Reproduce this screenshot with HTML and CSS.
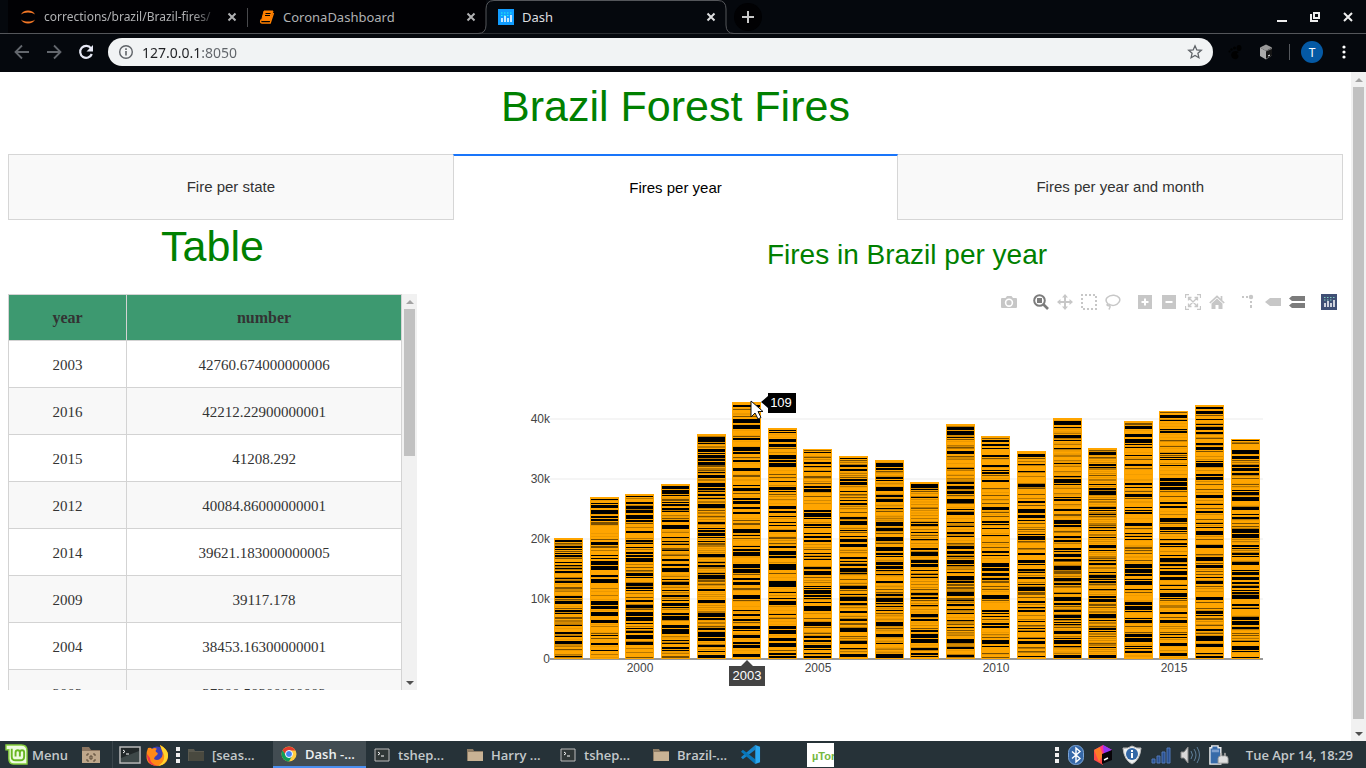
FILE: index.html
```html
<!DOCTYPE html>
<html lang="en">
<head>
<meta charset="utf-8">
<title>Dash</title>
<link rel="stylesheet" href="styles.css">
</head>
<body>
<div class="desktop">
  <header class="browser">
    <div class="tabstrip">
      <div class="btab">
        <svg class="i16" viewBox="0 0 16 16"><path d="M1 5.500C3 .3 13 .3 15 5.500C12 2.700 4 2.700 1 5.500zM1 10.500C3 15.700 13 15.700 15 10.500C12 13.300 4 13.300 1 10.500z" fill="#f37726"/></svg>
        <span class="btab-title faded">corrections/brazil/Brazil-fires/</span>
        <button class="x" aria-label="Close tab"><svg viewBox="0 0 10 10"><path d="M1.500 1.500l7 7M8.500 1.500l-7 7"/></svg></button>
      </div>
      <div class="btab divided">
        <svg class="i16" viewBox="0 0 16 16"><path d="M5 2h9l-2.500 9.500h-9z" fill="#ff8000" stroke="#ff8000" stroke-linejoin="round"/><path d="M2.200 10.500q-1.500 3.500.8 3.500h8.200L14.500 4" fill="none" stroke="#ff8000" stroke-width="1.400"/><path d="M6.500 4.500h5M6 6.500h5" stroke="#000" fill="none"/></svg>
        <span class="btab-title">CoronaDashboard</span>
        <button class="x" aria-label="Close tab"><svg viewBox="0 0 10 10"><path d="M1.500 1.500l7 7M8.500 1.500l-7 7"/></svg></button>
      </div>
      <div class="btab current">
        <svg class="outline" viewBox="0 0 256 34"><path d="M0 33.500Q8 33.500 8 25V9Q8 .5 16 .5H240Q248 .5 248 9V25Q248 33.500 256 33.500" fill="#05080d" stroke="#54565a"/></svg>
        <svg class="i16" viewBox="0 0 16 16"><path fill="#119dff" d="M0 0h16v16H0z"/><path d="M4 9v4M7 7v6M10 9v4M13 6v7" stroke="#fff" stroke-width="1.500"/><path d="M3 4h11M3 6.500h9" stroke="#25f4ee" stroke-dasharray="1.500 1.500"/></svg>
        <span class="btab-title">Dash</span>
        <button class="x" aria-label="Close tab"><svg viewBox="0 0 10 10"><path d="M1.500 1.500l7 7M8.500 1.500l-7 7"/></svg></button>
      </div>
      <button class="newtab" aria-label="New tab"><svg viewBox="0 0 12 12"><path d="M6 0v12M0 6h12" stroke="#c8c8c8" stroke-width="2"/></svg></button>
      <div class="winbtns">
        <button aria-label="Minimize"><svg viewBox="0 0 10 10"><path d="M0 9h10" stroke="#eee" stroke-width="2"/></svg></button>
        <button aria-label="Restore"><svg viewBox="0 0 10 10"><path d="M4 1h5v5H4z M1 2v7h7" fill="none" stroke="#eee" stroke-width="2"/></svg></button>
        <button aria-label="Close"><svg viewBox="0 0 10 10"><path d="M1 1l8 8M9 1l-8 8" stroke="#eee" stroke-width="2"/></svg></button>
      </div>
    </div>
    <div class="toolbar">
      <button aria-label="Back"><svg class="i16" viewBox="0 0 16 16"><path d="M15 8H2M8 1.500L1.500 8 8 14.500" fill="none" stroke="#63676d" stroke-width="1.800"/></svg></button>
      <button aria-label="Forward"><svg class="i16" viewBox="0 0 16 16"><path d="M1 8h13M8 1.500L14.500 8 8 14.500" fill="none" stroke="#63676d" stroke-width="1.800"/></svg></button>
      <button aria-label="Reload"><svg class="i16" viewBox="0 0 16 16"><path d="M13 4.300A6 6 0 1 0 13.800 10" fill="none" stroke="#e6e8f4" stroke-width="2.200"/><path d="M15 1v6.500H8.500z" fill="#e6e8f4"/></svg></button>
      <div class="omnibox">
        <svg class="i16" viewBox="0 0 16 16"><circle cx="8" cy="8" r="6.300" fill="none" stroke="#5f6368" stroke-width="1.400"/><path d="M8 7v4.500M8 4.300v1.600" stroke="#5f6368" stroke-width="1.600"/></svg>
        <input class="url" type="text" aria-label="Address" value="127.0.0.1:8050">
        <button aria-label="Bookmark"><svg class="i16" viewBox="0 0 16 16"><path d="M8 1.800l1.800 4.100 4.500.4-3.400 3 1 4.400L8 11.400l-3.900 2.300 1-4.400-3.400-3 4.500-.4z" fill="none" stroke="#5f6368" stroke-width="1.300"/></svg></button>
      </div>
      <div class="extensions">
        <svg class="i16" viewBox="0 0 16 16" fill="#000"><ellipse cx="12" cy="4" rx="2.500" ry="3"/><circle cx="7.500" cy="4" r="1.500"/><circle cx="4.500" cy="5.500" r="1.200"/><circle cx="2.500" cy="7.500" r="1"/><path d="M12 8C7 5 3 9 4.500 12.500S11 16 11.500 12.500 7 11.500 12 8z"/></svg>
        <svg class="i16" viewBox="0 0 16 16"><path d="M8 .5l6 3-6 3.500-6-3.500z" fill="#999"/><path d="M2 3.500L8 7v8.500l-6-3.500z" fill="#aaa"/><path d="M14 3.500L8 7v8.500l6-4z" fill="#777"/><path d="M8 7.500L14 5v6.500l-6 3z" fill="#151515"/><path d="M10 12l2-1" stroke="#fff"/></svg>
        <span class="bar"></span>
        <button class="avatar">T</button>
        <button class="kebab" aria-label="Menu"><svg viewBox="0 0 4 14" fill="#fff"><circle cx="2" cy="2" r="1.600"/><circle cx="2" cy="7" r="1.600"/><circle cx="2" cy="12" r="1.600"/></svg></button>
      </div>
    </div>
  </header>

  <div class="viewport">
    <main class="page">
      <h1>Brazil Forest Fires</h1>
      <nav class="tabs" role="tablist">
        <button class="tab" role="tab">Fire per state</button>
        <button class="tab selected" role="tab" aria-selected="true">Fires per year</button>
        <button class="tab" role="tab">Fires per year and month</button>
      </nav>
      <div class="columns">
        <section class="left">
          <h2>Table</h2>
          <div class="table-box">
            <table>
              <thead><tr><th class="year">year</th><th>number</th></tr></thead>
              <tbody>
                <tr><td>2003</td><td>42760.674000000006</td></tr>
                <tr><td>2016</td><td>42212.22900000001</td></tr>
                <tr><td>2015</td><td>41208.292</td></tr>
                <tr><td>2012</td><td>40084.86000000001</td></tr>
                <tr><td>2014</td><td>39621.183000000005</td></tr>
                <tr><td>2009</td><td>39117.178</td></tr>
                <tr><td>2004</td><td>38453.16300000001</td></tr>
                <tr><td>2002</td><td>37390.58300000002</td></tr>
              </tbody>
            </table>
            <div class="scroll"><i class="up"></i><span class="thumb table-thumb"></span><i class="down"></i></div>
          </div>
        </section>
        <section class="right">
          <h3>Fires in Brazil per year</h3>
          <div class="modebar">
            <div class="group"><button aria-label="Download plot"><svg viewBox="0 0 16 16"><path d="M1 4h3.500L6 2h4.500L12 4h3q1 0 1 1v8q0 1-1 1H1q-1 0-1-1V5q0-1 1-1z"/><circle cx="8" cy="8.700" r="3.400" fill="none" stroke="#fff" stroke-width="1.600"/></svg></button></div>
            <div class="group">
              <button class="on" aria-label="Zoom"><svg viewBox="0 0 16 16"><circle cx="6.500" cy="6.500" r="5.300" fill="none" stroke="currentColor" stroke-width="2"/><path d="M4 4h5v5H4z"/><path d="M10.500 10.500L15 15" stroke="currentColor" stroke-width="2.600"/></svg></button>
              <button aria-label="Pan"><svg viewBox="0 0 16 16"><path d="M8 0l3 3.500H9V7h3.500V5L16 8l-3.500 3V9H9v3.500h2L8 16l-3-3.500h2V9H3.500v2L0 8l3.500-3v2H7V3.500H5z"/></svg></button>
              <button aria-label="Box select"><svg viewBox="0 0 16 16"><path d="M1 1h14v14H1z" fill="none" stroke="currentColor" stroke-width="2" stroke-dasharray="2 2" stroke-dashoffset="1"/></svg></button>
              <button aria-label="Lasso select"><svg viewBox="0 0 16 16"><path d="M3 10C-2 5 4 .8 9 1.200s7 4 5 7-6 4-9 2.500c-3-2-4 1-1.500 1S5 14 3.800 15.500" fill="none" stroke="currentColor" stroke-width="1.500"/></svg></button>
            </div>
            <div class="group">
              <button aria-label="Zoom in"><svg viewBox="0 0 16 16"><path d="M1 1h14v14H1z"/><path d="M8 4.500v7M4.500 8h7" stroke="#fff" stroke-width="2"/></svg></button>
              <button aria-label="Zoom out"><svg viewBox="0 0 16 16"><path d="M1 1h14v14H1z"/><path d="M4.500 8h7" stroke="#fff" stroke-width="2"/></svg></button>
              <button aria-label="Autoscale"><svg viewBox="0 0 16 16"><path d="M.5 4V.5H4M12 .5h3.500V4M15.500 12v3.500H12M4 15.500H.5V12M4 4l8 8M12 4l-8 8M3.500 6.500v-3h3M9.500 3.500h3v3M12.500 9.500v3h-3M6.500 12.500h-3v-3" fill="none" stroke="currentColor" stroke-width="1.300"/></svg></button>
              <button aria-label="Reset axes"><svg viewBox="0 0 16 16"><path d="M8 4.500l5.500 5V15H9.500v-4h-3v4h-4V9.500z"/><path d="M.8 9L8 2.300 15.200 9M12.500 2v4" fill="none" stroke="currentColor" stroke-width="1.700"/></svg></button>
            </div>
            <div class="group">
              <button aria-label="Toggle spike lines"><svg viewBox="0 0 16 16"><path d="M1 3h2M5 3h2M10 7v2M10 11v3" stroke="currentColor" stroke-width="2"/><circle cx="10" cy="3" r="2.200"/></svg></button>
              <button aria-label="Closest data"><svg viewBox="0 0 16 16"><path d="M0 8l5-4h11v8H5z"/></svg></button>
              <button class="on" aria-label="Compare data"><svg viewBox="0 0 16 16"><path d="M0 4.500L3 2h13v5H3zM0 11.500L3 9h13v5H3z"/></svg></button>
            </div>
            <div class="group"><button aria-label="Plotly"><svg viewBox="0 0 16 16"><path d="M0 0h16v16H0z" fill="#3f4f75"/><path d="M4 9v4M7 7v6M10 9v4M13 6v7" stroke="#fff" stroke-width="1.500"/><path d="M3 3.500h11M3 6h9" stroke="#80cfbe" stroke-dasharray="1.500 1.500"/></svg></button></div>
          </div>
          <svg class="chart" viewBox="0 0 872 376" role="img" aria-label="Fires in Brazil per year">
            <path d="M79 105h713M79 165h713M79 225h713M79 285h713" stroke="#f5f5f5" stroke-width="2"/>
            <path d="M79 345h713" stroke="#999" stroke-width="2"/>
            <g id="bars" shape-rendering="crispEdges"></g>
            <g class="ticks ytick"><text x="79" y="109">40k</text><text x="79" y="169">30k</text><text x="79" y="229">20k</text><text x="79" y="289">10k</text><text x="79" y="349">0</text></g>
            <g class="ticks xtick"><text x="169" y="358">2000</text><text x="347" y="358">2005</text><text x="525" y="358">2010</text><text x="703" y="358">2015</text></g>
            <path d="M290 88l7-6v-3h28v20h-28v-5z" fill="#000"/>
            <path d="M276 346l6 6h12v20h-36v-20h12z" fill="#444"/>
            <g class="hover"><text x="310" y="93">109</text><text x="276" y="366">2003</text></g>
            <path d="M280 87v16l4-4 3 6 3-1.500-3-6h5z" fill="#fff" stroke="#111"/>
          </svg>
        </section>
      </div>
    </main>
    <div class="scroll"><i class="up"></i><span class="thumb page-thumb"></span><i class="down"></i></div>
  </div>

  <footer class="taskbar">
    <button class="menu"><svg class="mint" viewBox="0 0 24 22"><path d="M1 1h16q6 0 6 6v14H9q-5 0-5-6V6H1z" fill="#eefbe0" stroke="#87cf3e" stroke-width="1.500"/><path d="M7 5v8q0 4 4 4h5q4 0 4-4V9q0-2.500-2.200-2.500T15.500 9v4M15.500 9q0-2.500-2.200-2.500T11 9v4" fill="none" stroke="#68b723" stroke-width="2"/></svg>Menu</button>
    <button class="files" aria-label="Files"><svg viewBox="0 0 20 18"><path d="M1 1h7l2 3h9v13H1z" fill="#8b7560"/><path d="M1 5h18v12H1z" fill="#bfa78b"/><path d="M6 10V8h2M12 8h2v2M14 13v2h-2M8 15H6v-2M9 10h2v3H9z" fill="none" stroke="#594836"/></svg></button>
    <button class="launch first" aria-label="Terminal"><svg viewBox="0 0 22 18"><path d="M1 1h20v16H1z" fill="#222829" stroke="#bbb" stroke-width="1.500"/><path d="M2 12l18-7v11H2z" fill="#3e4848"/><path d="M4 4l2 1.500L4 7M7 8h3" stroke="#fff" fill="none"/></svg></button>
    <button class="launch" aria-label="Firefox"><svg viewBox="0 0 22 22"><circle cx="11" cy="11.500" r="9" fill="#3b3fb8"/><path d="M2 4q3-1 4 1 3-2 5 0-2 1-1 3 3 1 1 3-3 2-3 4 3 2 6 0 4-3 2-8l-2-6q8 4 8 11 0 9-11 10Q0 21 .5 12 .5 7 2 4z" fill="#ff8a16"/><path d="M14 1q9 5 8 12-2 8-10 9 7-4 6-11z" fill="#ffd52d"/><path d="M1 10q0 12 11 12-8-2-8-8z" fill="#f1334b"/></svg></button>
    <svg class="dots" viewBox="0 0 4 16"><path d="M0 0h4v4H0zM0 6h4v4H0zM0 12h4v4H0z" fill="#eee"/></svg>
    <button class="win"><svg class="i16" viewBox="0 0 16 16"><path d="M0 2h6l1 2h9v10H0z" fill="#5a594f"/><path d="M1 5h15v9H1z" fill="#49493f"/></svg>[seas...</button>
    <button class="win active"><svg class="i16" viewBox="0 0 16 16"><circle cx="8" cy="8" r="7.500" fill="#ffcd40"/><path d="M1.500 4.300A7.500 7.500 0 0 1 14.500 4.500H8L4.800 9.500z" fill="#e33b2e"/><path d="M1.500 4.300A7.500 7.500 0 0 0 8 15.500L11 10 5 9.500z" fill="#109d58"/><circle cx="8" cy="8" r="3.500" fill="#4285f4" stroke="#fff"/></svg>Dash -...</button>
    <button class="win"><svg class="i16" viewBox="0 0 16 16"><path d="M1 2h14v12H1z" fill="#303737" stroke="#bbb"/><path d="M4 5l2 1.500L4 8M7 9h3" stroke="#fff" fill="none"/></svg>tshep...</button>
    <button class="win"><svg class="i16" viewBox="0 0 16 16"><path d="M0 2h6l1 2h9v10H0z" fill="#8f7d66"/><path d="M1 5h15v9H1z" fill="#c8b294"/></svg>Harry ...</button>
    <button class="win"><svg class="i16" viewBox="0 0 16 16"><path d="M1 2h14v12H1z" fill="#303737" stroke="#bbb"/><path d="M4 5l2 1.500L4 8M7 9h3" stroke="#fff" fill="none"/></svg>tshep...</button>
    <button class="win"><svg class="i16" viewBox="0 0 16 16"><path d="M0 2h6l1 2h9v10H0z" fill="#8f7d66"/><path d="M1 5h15v9H1z" fill="#c8b294"/></svg>Brazil-...</button>
    <button class="code" aria-label="Code"><svg viewBox="0 0 22 22"><path d="M16 1L1 14l2 2L16 6z" fill="#1684ca"/><path d="M16 21L1 8l2-2 13 10z" fill="#0876b9"/><path d="M16 1l5 2v16l-5 2z" fill="#29a7f0"/></svg></button>
    <span class="utor">µTor</span>
    <div class="tray">
      <svg class="dots" viewBox="0 0 4 16"><path d="M0 0h4v4H0zM0 6h4v4H0zM0 12h4v4H0z" fill="#eee"/></svg>
      <svg class="t16" viewBox="0 0 16 20"><rect x=".5" y=".5" width="15" height="19" rx="7" fill="#3668a8" stroke="#7aa5d8"/><path d="M4 6.500l8 7-4 3.500V3l4 3.500-8 7" fill="none" stroke="#fff" stroke-width="1.400"/></svg>
      <svg class="t20" viewBox="0 0 20 20"><path d="M10 0l9 5-9 5-9-5z" fill="#ff328b"/><path d="M1 5l9 5v10l-9-5z" fill="#ff4848"/><path d="M1 5l6-3 3 8-4 7z" fill="#ff7c28"/><path d="M10 0l9 5-8 5z" fill="#9435f5"/><path d="M9 9l10-4v10L9 19z" fill="#080408"/><path d="M11 15l4-2" stroke="#fff" stroke-width="1.500"/></svg>
      <svg class="t20" viewBox="0 0 20 20"><path d="M10 1q5 3 9 2-1 12-9 16Q2 15 1 3q5 1 9-2z" fill="#eef0f0" stroke="#bbb"/><circle cx="10" cy="9" r="6" fill="#3267a6"/><path d="M10 8v5M10 5v2" stroke="#fff" stroke-width="2"/></svg>
      <svg class="t20" viewBox="0 0 20 16"><path d="M1 12h3v4H1zM6 9h3v7H6zM11 5h3v11h-3zM16 1h3v15h-3z" fill="#284f91" stroke="#5078b8"/></svg>
      <svg class="t20" viewBox="0 0 20 18"><path d="M1 6h3l4-5v16l-4-5H1z" fill="#d8d8d8" stroke="#888"/><path d="M11 5q3 4 0 8M14 3q4 6 0 12M17 1q5 8 0 16" fill="none" stroke="#5f7f9a"/></svg>
      <svg class="t20" viewBox="0 0 22 22"><path d="M3 1h7v2h3v18H1V3h2z" fill="#386ba9" stroke="#eee" stroke-width="1.500"/><path d="M3 5h8v3H3z" fill="#7d9fce"/><path d="M10 20v-5q0-3 3-3V9h1v3h3V9h1v3q3 0 3 3v5z" fill="#dedede" stroke="#999"/></svg>
      <time>Tue Apr 14, 18:29</time>
    </div>
  </footer>
</div>
<script src="chart.js"></script>
</body>
</html>
```
FILE: styles.css
```css
* { box-sizing: border-box; }
body { margin: 0; font-family: "Liberation Sans", Arial, sans-serif; background: #fff; }
button { border: 0; padding: 0; margin: 0; background: none; font: inherit; color: inherit; display: flex; align-items: center; }
svg { display: block; flex: none; }
.i16 { width: 16px; height: 16px; }
.desktop { display: flex; flex-direction: column; height: 100vh; overflow: hidden; }

.browser { background: #05080d; font: 13px "Noto Sans", "Open Sans", sans-serif; flex: none; }
.tabstrip { display: flex; align-items: center; height: 34px; padding-left: 8px; border-bottom: 1px solid #54565a; }
.btab { display: flex; align-items: center; gap: 8px; width: 239px; height: 33px; padding: 0 10px 0 12px; color: #b0b1b3; background: #010104; position: relative; }
.btab > * { position: relative; }
.btab-title { flex: 1; white-space: nowrap; overflow: hidden; }
.faded { font-size: 12px; -webkit-mask-image: linear-gradient(90deg, #000 85%, transparent); mask-image: linear-gradient(90deg, #000 85%, transparent); }
.divided::before { content: ""; position: absolute; left: 0; top: 8px; width: 1px; height: 19px; background: #48494c; }
.current { width: 240px; background: #05080d; color: #dddee0; }
.btab > .outline { position: absolute; left: -8px; top: 0; width: 256px; height: 34px; }
.x svg { width: 10px; height: 10px; fill: none; stroke: currentColor; stroke-width: 2; }
.newtab { width: 28px; height: 28px; margin-left: 8px; border-radius: 50%; background: #010103; justify-content: center; }
.newtab svg { width: 12px; height: 12px; }
.winbtns { display: flex; gap: 23px; margin-left: auto; padding-right: 13px; }
.winbtns svg { width: 10px; height: 10px; }
.toolbar { display: flex; align-items: center; gap: 16px; height: 38px; padding: 0 20px 2px 14px; }
.omnibox { display: flex; align-items: center; gap: 8px; flex: 1; height: 28px; margin-left: -2px; padding: 0 10px; border-radius: 14px; background: #f1f3f4; }
.url { flex: 1; border: 0; padding: 0; outline: 0; font: 14px "Noto Sans", sans-serif; color: transparent; background: linear-gradient(90deg, #202124 59px, #5f6368 59px); -webkit-background-clip: text; background-clip: text; }
.extensions { display: flex; align-items: center; gap: 15px; margin-left: -2px; }
.bar { width: 1px; height: 16px; background: #55585d; }
.avatar { width: 22px; height: 22px; margin: 0 4px 0 -4px; border-radius: 50%; justify-content: center; background: #0559a4; color: #fff; font-size: 12px; }
.kebab svg { width: 4px; height: 14px; }

.viewport { flex: 1; min-height: 0; display: flex; }
.page { flex: 1; min-width: 0; padding: 8px; overflow: hidden; }
h1, h2, h3 { margin: 0; font-weight: 400; color: green; text-align: center; }
h1 { font-size: 43px; line-height: 52px; margin-bottom: 22px; }
.tabs { display: flex; }
.tab { flex: 1; justify-content: center; height: 66px; padding-bottom: 2px; font-size: 15px; color: #333; background: #f9f9f9; border: 1px solid #d6d6d6; }
.tab:first-child { border-right: 0; }
.tab:last-child { border-left: 0; }
.selected { background: #fff; color: #000; border-top: 2px solid #1975fa; border-bottom: 0; }
.columns { display: grid; grid-template-columns: 409px 1fr; gap: 54px; }
h2 { font-size: 43px; line-height: 52px; margin-bottom: 22px; }
h3 { font-size: 28px; line-height: 34px; padding-top: 18px; margin-bottom: 22px; }
.table-box { display: flex; height: 396px; overflow: hidden; }
table { flex: 1; height: max-content; border-collapse: collapse; table-layout: fixed; font: 15px "Liberation Serif", serif; color: #333; text-align: center; }
th, td { height: 47px; padding: 2px 0 0; border: 1px solid #d3d3d3; }
th { height: 46px; padding: 0; font-size: 16px; background: #3d9970; }
.year { width: 118px; }
tbody tr:nth-child(even) { background: #f8f8f8; }

.scroll { flex: none; width: 15px; display: flex; flex-direction: column; align-items: center; background: #f1f1f1; }
.scroll i { height: 15px; display: flex; align-items: center; flex: none; }
.scroll i::before { content: ""; border: 4px solid transparent; }
.scroll .up::before { border-top: 0; border-bottom-color: #a3a3a3; }
.scroll .down { margin-top: auto; }
.scroll .down::before { border-bottom: 0; border-top-color: #505050; }
.thumb { width: 11px; background: #c1c1c1; }
.table-thumb { height: 147px; }
.page-thumb { flex: 0 1 632px; }

.modebar { display: flex; justify-content: flex-end; gap: 16px; padding-right: 6px; height: 20px; color: #c7c7c7; }
.group { display: flex; gap: 8px; }
.modebar button { height: 16px; }
.modebar svg { width: 16px; height: 16px; fill: currentColor; }
.modebar .on { color: #7c7c7c; }
.chart { width: 100%; height: auto; }
.ticks { font: 12px "Liberation Sans", sans-serif; fill: #444; }
.ytick { text-anchor: end; }
.xtick, .hover { text-anchor: middle; }
.hover { font: 13px "Liberation Sans", sans-serif; fill: #fff; }

.taskbar { flex: none; display: flex; align-items: center; height: 27px; background: #263238; color: #c4c9cb; font: 600 13px "Open Sans", "Noto Sans", sans-serif; }
.menu { gap: 4px; padding-left: 5px; width: 81px; }
.mint { width: 23px; height: 21px; }
.files { width: 32px; height: 27px; border-right: 1px solid #3a454b; }
.files svg { width: 20px; height: 18px; }
.launch { width: 27px; }
.launch.first { margin-left: 6px; }
.launch svg { width: 22px; height: 22px; }
.dots { width: 4px; height: 16px; }
.launch + .dots { margin-left: 3px; }
.win { width: 93px; height: 27px; gap: 8px; padding-left: 8px; flex: none; white-space: nowrap; overflow: hidden; }
.active { background: #424c52; color: #eef0f1; border-bottom: 2px solid #4a8ff0; }
.code { margin-left: 2px; }
.code svg { width: 21px; height: 21px; }
.utor { width: 27px; height: 24px; margin-left: 46px; padding-left: 5px; overflow: hidden; background: #fff; color: #76b83f; font: bold 11px/26px "Liberation Sans", sans-serif; }
.tray { margin-left: auto; display: flex; align-items: center; gap: 9px; padding-right: 13px; }
.t16 { width: 16px; height: 20px; }
.t20 { width: 20px; height: 20px; }
.tray time { margin-left: 8px; white-space: nowrap; }
```
FILE: chart.js
```js
// One entry per year from 1998: [bar top, stripes]. Three units make one chart unit.
// A stripe is "start,thickness"; suffix m is a half-dense stripe, l a faint one.
const years = [
[475,"480,8 488,4m 498,6 506,5 513,4m 518,5 525,7 535,5m 546,3 555,4 564,3 573,6 594,4 603,8 622,6m 648,7 656,4m 663,9 684,3m 689,6 699,5 710,6m 720,4l 735,4 756,6 768,5 783,11 808,4m 827,5"],
[352,"357,3 369,3 376,9 389,12 407,7 418,6 425,7m 433,5m 478,5m 486,9 498,8m 510,3l 525,3 533,4 542,14 557,13 585,7 598,13 625,3l 645,3l 662,12 677,9 695,12 719,9 738,3l 760,4m 766,4 774,3m 789,6 810,4 823,3l"],
[343,"349,4 366,7 378,9 390,11 404,12 420,6 429,3m 453,6 480,6 489,3 501,3 516,6 524,7 534,12 562,5m 570,3m 578,9 591,3 609,9 621,6 631,5 651,3m 659,6 674,10 686,4m 696,12 711,13 729,3 744,3 753,8 765,12 786,9 831,3m"],
[313,"318,9 330,12 345,3 358,8m 366,3 372,8 384,6 393,3 414,4m 420,8 434,12 471,3 483,3 492,3 503,6m 510,4 525,5m 537,8 552,6 564,12 597,5 606,9 630,3 645,6 660,3 668,10 681,3 699,6 709,12 735,10 747,15 780,3 789,5 801,6 810,3 827,8m"],
[163,"170,15 189,3 207,9 219,4 225,9 237,6 245,9 255,6m 270,3m 277,4 285,9 309,12 324,6 333,3 341,8 354,5 372,12 390,4m 408,3m 426,6 444,4 451,7 459,9 471,5 483,4 489,6m 521,10 547,4 555,8 579,3 585,13 600,6m 612,4m 627,8 660,9 699,12 714,6 738,4m 745,8 756,15 774,10 795,6 813,5 825,10"],
[67,"76,8 87,3m 108,4m 117,13 135,12 167,4m 173,8 201,12 215,6 231,4m 239,6 264,9 285,8m 315,4 323,10 340,5m 354,6 364,10 381,6 395,8 420,5m 429,6m 447,13 465,4 473,3m 498,5 507,6 516,12 552,12 567,12 582,5m 594,8 606,10 624,6m 644,12 660,3m 690,3 702,6 716,7 727,4m 738,9 751,5 765,9 786,6 795,9 822,11"],
[145,"150,4 157,3 177,10 192,10 205,5m 225,12 239,6 250,12 282,4m 290,3m 303,4 321,9 333,5 342,4m 357,3l 378,10 393,6 408,4 426,5 435,4 450,8 472,8m 490,5m 498,8 513,12 528,8 552,15 568,4 580,4m 602,9 611,10 636,5 654,4 663,12 702,4 714,4m 738,10 750,12 774,9 789,13 810,4m 820,6 829,6"],
[206,"209,5m 217,5 230,3m 246,8 258,4 273,5 287,6m 309,3m 318,6 328,10 348,3m 390,6 399,12 414,5 432,7 440,4 459,5 469,6 480,8 507,3m 519,4 528,4 538,5 561,8 573,12 590,4m 606,3l 618,3 624,3 630,12 645,8 654,4 666,5 678,12 690,3 715,3m 726,12 742,3m 760,4m 768,7 780,8 795,10 807,3 820,3 829,6"],
[227,"234,3 241,3m 255,8 267,6 291,4m 297,6 306,9 333,4 342,3m 351,4m 361,5 369,8 396,4m 411,8 423,12 449,3 456,3m 468,4 477,9 492,9 530,7 543,3 552,6 564,12 579,3 597,5m 618,9 630,5m 642,5 652,14 669,8 693,6 717,6 730,6m 744,13 769,4m 783,9 804,5 823,11"],
[241,"249,12 263,6 273,4m 291,6 300,5 321,12 345,8 357,10 384,5 393,3m 413,3l 426,12 443,10 459,3m 471,6 478,8 490,5m 502,14 519,6 528,3 546,9 558,9 570,5 582,3 603,6 627,4m 636,3m 642,6 654,12 669,4 678,5 690,5 700,5m 726,14 745,4m 762,9 789,3 808,3l 822,12"],
[307,"312,12 327,3 333,3m 351,4 384,5m 426,4 433,6 456,3 465,3m 477,4 504,8 516,12 540,10 552,11 570,3 582,4 590,3 612,3l 626,3m 639,7 651,6 661,4m 675,5 702,9 717,8 743,4m 750,6 762,13 777,14 805,6 819,8 829,5"],
[133,"140,9 153,13 170,3 176,3m 200,4m 213,10 228,3m 264,4 285,3l 306,6 318,10 332,10 344,3m 357,12 369,3m 387,3 397,10 426,3 438,4 457,8 468,5 490,4m 498,10 513,9 528,3 540,12 555,3 576,5 587,12 602,6 612,6m 620,6m 636,12 654,6m 661,5 673,8 686,5 699,3 720,3 732,4m 741,3 750,4m 777,12 801,8 825,6"],
[169,"174,3m 180,8 192,6 203,5 225,6 235,4m 255,6 270,3 276,6 285,4m 300,8 324,3m 345,4m 358,3l 369,3m 381,10 396,3m 408,3m 422,8 432,3 444,5 465,4 486,5m 501,3m 513,8 525,5 549,12 564,9 579,9 593,6 604,6m 618,3m 627,5m 645,12 660,3m 690,6 699,3 707,3 717,4m 729,6 738,6 762,3l 771,4m 779,12 798,5 818,3m 830,4m"],
[213,"221,9 234,3m 252,4 273,5 312,10 325,4m 342,3m 363,6 375,4m 386,12 404,10 420,3 430,5m 448,4m 461,4 468,12 483,4m 505,4m 519,6 540,9 552,3 568,6 577,4 591,6 612,5 621,12 636,9m 650,5m 663,8 681,4 691,8 723,4 735,3m 744,5 753,3 774,4 782,9 800,5m 813,3m 829,5"],
[115,"123,12 140,3 165,11 180,3 204,3 228,3l 249,3 288,4 296,12 312,3 350,3 357,6 387,7 402,6m 419,12 434,8 453,4m 467,6 479,7 504,6 513,3 522,9 536,6 544,5m 558,12 573,9m 594,11 609,6 618,3m 639,5 650,13 668,8 679,3m 690,6 705,9 718,5 726,3 733,4 740,3m 754,9 773,3 780,14 798,5 824,10"],
[204,"209,3m 216,9 230,4m 252,6 262,5 286,4m 312,3 324,6 333,12 357,3m 381,6 391,5 401,3 408,3m 435,4m 441,4 450,3 472,4 495,11 511,5 534,4m 540,4 549,8 576,3 584,10 597,4 603,6 612,5m 628,4 648,6 657,9 671,8m 681,3m 702,12 719,4 737,3m 744,6 754,3 768,3m 789,3m 801,4 824,10"],
[124,"129,6m 138,9 162,9 177,12 193,4 201,3 225,5 237,3m 252,6 264,3m 309,6 320,3 333,3m 341,9 354,4m 381,4 390,5 397,7 430,9 443,3m 459,3 468,5 477,3 501,6m 511,4m 519,3m 540,4m 551,12 567,12 582,8 597,3 603,12 627,3 636,4m 665,9 678,12 693,5 714,4 720,11 738,3m 756,4m 762,9 774,12 798,3 805,5 813,6"],
[94,"96,5m 106,10 120,5 147,3 153,8 180,5m 198,3m 218,4 225,3m 231,3 238,3 255,3 294,9 306,12 321,9 333,3m 349,3m 366,6 377,8 402,3l 414,12 430,3m 441,9 453,3 460,3m 477,3 489,6 498,3 525,5 534,12 551,6 564,4 573,12 591,11 615,5 627,5 638,12 653,5 660,3m 675,9l 696,6 710,4m 720,9 738,4l 756,4m 763,5 771,3 789,9 820,10"],
[76,"81,8 93,9 106,4m 117,3 132,5 141,9 155,8 175,3m 189,8 201,10 214,4m 243,5 249,12 282,6 292,10 312,3m 327,3m 345,9 372,3 384,3m 393,6 417,3m 429,4 441,5 453,14 477,3m 495,9 522,5m 531,12 549,3m 555,9 573,4m 582,3m 591,5 603,9 619,4m 651,9 666,3m 684,4m 693,9 705,4 713,6m 735,4m 748,6 758,4m 768,12 781,5 792,10 819,5 828,6"],
[176,"179,4 189,5m 209,12 228,9 240,3m 255,6 265,10 279,6 294,3m 312,3m 330,4 337,10 351,12 381,10 401,5 410,8 429,3m 438,3m 447,12 463,12 495,7 505,4 519,6 528,3 545,9 570,5 577,9 591,10 606,8 619,6 630,3 636,6 645,12 672,6 684,4 711,9 723,12 741,6 759,3m 765,3m 783,5 797,12 813,5 830,4"]
];
const ns = "http://www.w3.org/2000/svg";
const host = document.getElementById("bars");
function rect(x, y, w, h, fill) {
  const r = document.createElementNS(ns, "rect");
  Object.entries({ x, y, width: w, height: h, fill }).forEach(([k, v]) => r.setAttribute(k, v));
  host.appendChild(r);
}
const offset = 66;
years.forEach(([top, stripes], i) => {
  const x = Math.round(83.2 + 35.6 * i);
  const y0 = offset + Math.round(top / 3);
  rect(x, y0, 29, 345 - y0, "#ffa500");
  for (let y = y0 + 2; y < 344; y++) {
    const n = (y * 37 + i * 53 + y * y * 7) % 11;
    if (n < 4) rect(x + 1, y, 27, 1, ["#d58a00", "#ed9900", "#f29d00", "#b97700"][n]);
  }
  stripes.split(" ").forEach(s => {
    const kind = s.slice(-1);
    const [start, size] = s.split(",").map(v => parseInt(v, 10));
    const fill = kind === "m" ? "#7a4f00" : kind === "l" ? "#b87700" : "#000";
    const y = Math.max(y0 + 1, offset + Math.round(start / 3));
    rect(x + 1, y, 27, Math.max(1, Math.round((size - 1) / 3)), fill);
  });
});
```
